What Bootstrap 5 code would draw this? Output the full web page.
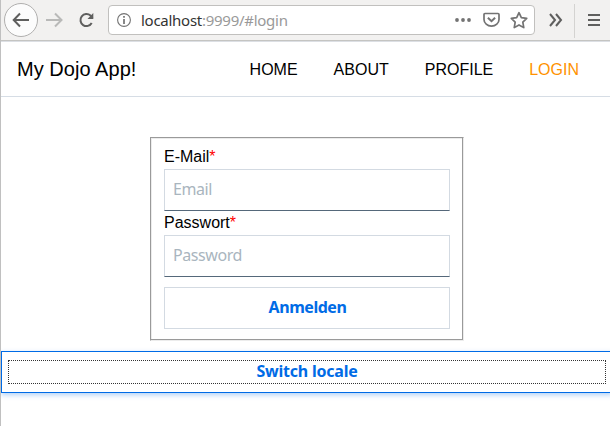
<!DOCTYPE html>
<html lang="de">
<head>
<meta charset="utf-8">
<meta name="viewport" content="width=device-width, initial-scale=1">
<title>My Dojo App!</title>
<link href="https://cdn.jsdelivr.net/npm/bootstrap@5.3.0/dist/css/bootstrap.min.css" rel="stylesheet">
<style>
  body { height: 426px; font: 16px/24px "Liberation Sans", Arial, sans-serif; color: #000; border-left: 1px solid #c0c0c0; }
  .browser-bar { height: 42px; background: #f2f1f0; border-bottom: 1px solid #dcdfe4; box-shadow: inset 0 -1px #c4c4c2; padding-left: 3px; }
  .browser-bar svg { display: block; flex: none; fill: none; stroke: #737373; stroke-width: 2; }
  .back-btn { width: 34px; height: 34px; margin-top: -1px; border: 1px solid #b0afae; background: #fcfcfc; }
  .browser-bar .back-btn svg, .browser-bar .ink { stroke: #5f5f5e; }
  .browser-bar .ink { margin-top: -1px; }
  .browser-bar .faded { stroke: #b9b9b8; margin-top: -1px; }
  .reload { margin-left: 13px; }
  .address { width: 427px; height: 30px; margin: -1px 0 0 13px; border: 1px solid #c1c0be; border-radius: 4px; background: #fff; font: 15px/28px "Noto Sans", "Open Sans", sans-serif; color: #333; padding-left: 8px; }
  .address .url { width: 314px; margin-left: 10px; letter-spacing: -.27px; }
  .address .path { color: #999; }
  .bar-rule { width: 1px; height: 34px; background: #d4d3d1; margin: 0 13px 0 10px; }
  .more { margin-left: 13px; }
  .pocket { margin-left: 11px; }
  .site-nav { height: 55px; border-bottom: 1px solid #d6dde5; padding: 1px 31px 0 16px; }
  .site-nav .navbar-brand { font-size: 20px; color: #000; margin: -2px 0 0; letter-spacing: .04px; }
  .site-nav .nav { gap: 36px; }
  .site-nav .nav-link { color: #000; }
  .site-nav .nav-link.active { color: #ff9200; }
  .login-box { width: 314px; height: 204px; margin: 40px 0 10px 149px; border: 1px solid; border-color: #9a9a9a #ececec #ececec #9a9a9a; box-shadow: inset -1px -1px #9a9a9a, inset 1px 1px #ececec; padding: 7px 13px 0; }
  .required-star { color: #f00; }
  .login-box .form-control, .dojo-btn { height: 42px; font: 16px/24px "Noto Sans", "Open Sans", sans-serif; }
  .login-box .form-control { padding: 0 8px 2px; border-color: #d3dae2; border-bottom-color: #55687a; letter-spacing: -.42px; }
  .login-box .form-control::placeholder { color: #a9b5be; opacity: 1; }
  .dojo-btn { font-weight: 700; color: #006be6; border: 1px solid #d3dae2; padding: 0; letter-spacing: -.45px; }
  .submit-btn { margin-top: 10px; padding: 0 0 2px 1px; }
  .switch-btn { width: 612px; border-color: #006be6; box-shadow: 0 2px 5px #006be64d; padding: 8px 6px; letter-spacing: -.22px; }
  .switch-btn .focus-line { height: 24px; border: 1px dotted #333; line-height: 20px; }
</style>
</head>
<body class="overflow-hidden bg-white">
<header class="browser-bar d-flex align-items-center">
  <div class="back-btn rounded-circle d-flex align-items-center justify-content-center">
    <svg width="18" height="16" viewBox="0 0 18 16"><path d="M17 8H2M8 1.5 1.7 8 8 14.5"/></svg>
  </div>
  <svg class="faded ms-2" width="18" height="16" viewBox="0 0 18 16"><path d="M0 8h15M9 1.5 15.5 8 9 14.5"/></svg>
  <svg class="ink reload" width="18" height="18" viewBox="0 0 17 18"><path d="M14.2 12A6 6 0 1 1 13 4.6L15 7"/><path d="M15.8 2v6H10z" fill="#5f5f5e" stroke="none"/></svg>
  <div class="address d-flex align-items-center">
    <svg width="14" height="14" viewBox="0 0 14 14"><circle cx="7" cy="7" r="6.4" stroke-width="1.1"/><path d="M7 6v5M7 3v1.7" stroke-width="1.7"/></svg>
    <div class="url text-nowrap">localhost<span class="path">:9999/#login</span></div>
    <svg width="17" height="6" viewBox="0 0 17 6"><g fill="#737373" stroke="none"><circle cx="2" cy="3" r="1.9"/><circle cx="8" cy="3" r="1.9"/><circle cx="14" cy="3" r="1.9"/></g></svg>
    <svg class="pocket" width="18" height="16" viewBox="0 0 18 16"><path d="M2 1.5h13q1 0 1 1v5a7.5 6.7 0 0 1-15 0v-5q0-1 1-1z" stroke-width="1.7"/><path d="m4.9 5.7 3.6 3.5 3.6-3.5"/></svg>
    <svg class="ms-2" width="20" height="18" viewBox="0 0 18 17"><path d="m9 1.6 2.2 4.7 5.1.7-3.7 3.6.9 5.1L9 13.2l-4.5 2.5.9-5.1L1.7 7l5.1-.7z" stroke-width="1.6" stroke-linejoin="round"/></svg>
  </div>
  <svg class="ink more" width="16" height="14" viewBox="0 0 16 14"><path d="m2 1 5 6-5 6M8 1l5 6-5 6"/></svg>
  <div class="bar-rule"></div>
  <svg class="ink" width="12" height="12" viewBox="0 0 12 12"><path d="M0 1h12M0 6h12M0 11h12"/></svg>
</header>
<nav class="site-nav d-flex align-items-center justify-content-between">
  <a class="navbar-brand p-0" href="#home">My Dojo App!</a>
  <div class="nav flex-nowrap">
    <a class="nav-link p-0" href="#home">HOME</a>
    <a class="nav-link p-0" href="#about">ABOUT</a>
    <a class="nav-link p-0" href="#profile">PROFILE</a>
    <a class="nav-link p-0 active" href="#login">LOGIN</a>
  </div>
</nav>
<form class="login-box">
  <label class="form-label d-block m-0" for="email">E-Mail<span class="required-star">*</span></label>
  <input class="form-control rounded-0" id="email" type="email" placeholder="Email">
  <label class="form-label d-block m-0" for="password">Passwort<span class="required-star">*</span></label>
  <input class="form-control rounded-0" id="password" type="password" placeholder="Password">
  <button class="btn dojo-btn submit-btn rounded-0 w-100" type="button">Anmelden</button>
</form>
<button class="btn dojo-btn switch-btn rounded-0 d-block" type="button"><span class="focus-line d-block">Switch locale</span></button>
</body>
</html>
